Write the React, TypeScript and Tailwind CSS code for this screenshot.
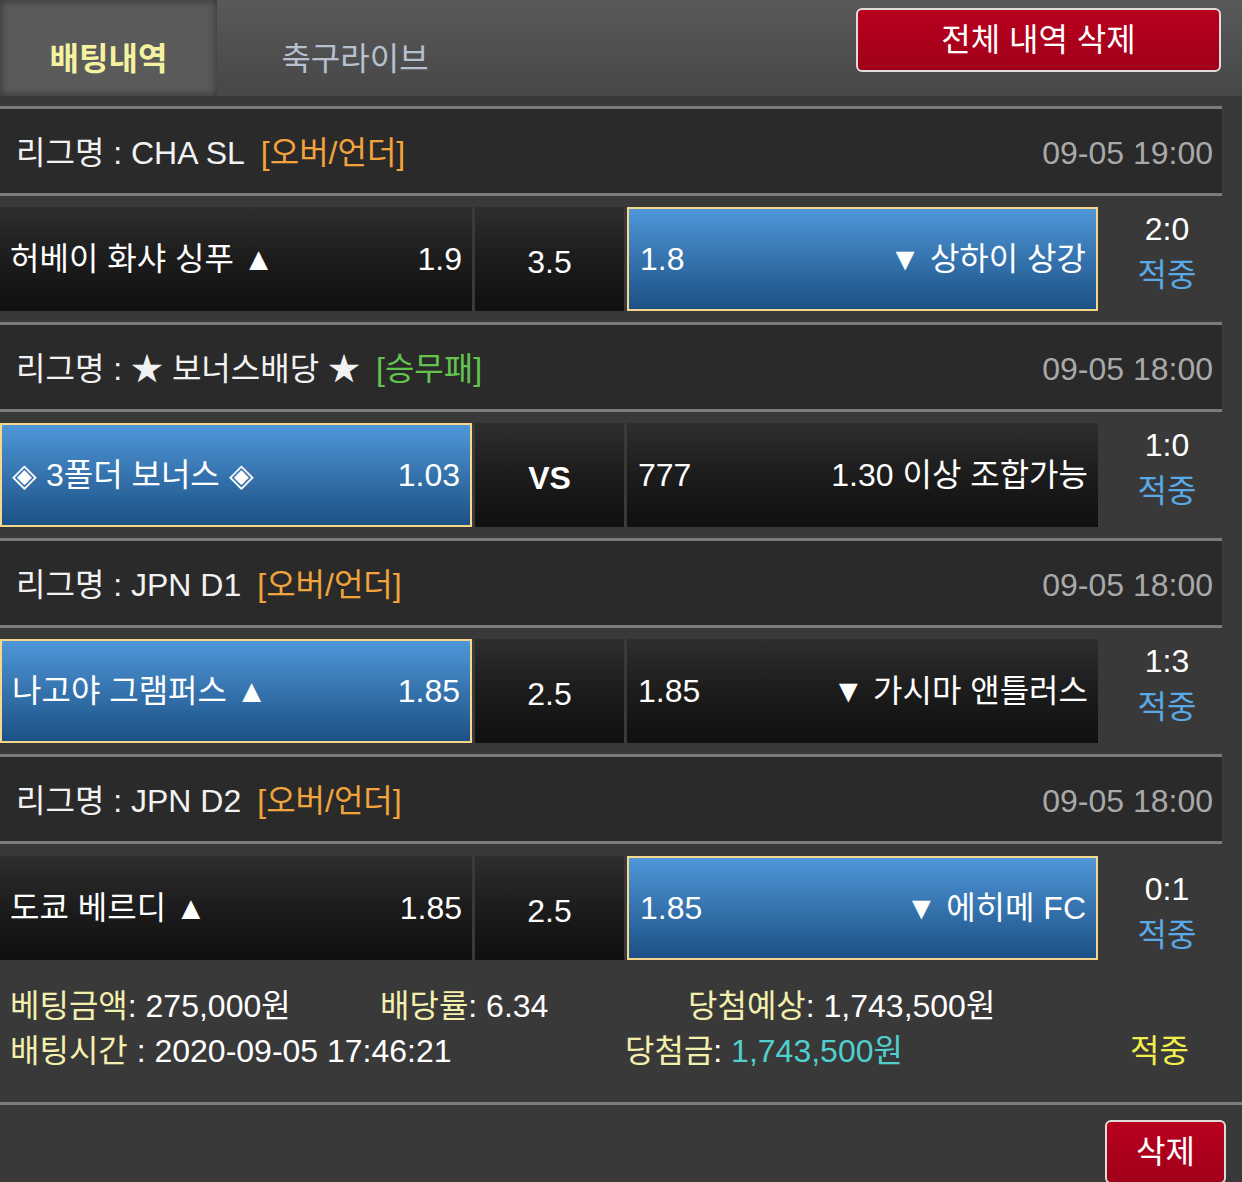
import React from "react";

type Side = { name: string; odds: string };
type Bet = {
  league: string;
  tag: string;
  tagColor: string;
  time: string;
  home: Side;
  mid: string;
  midBold?: boolean;
  away: Side;
  pick: "home" | "away";
  score: string;
};

const bets: Bet[] = [
  {
    league: "리그명 : CHA SL",
    tag: "[오버/언더]",
    tagColor: "text-[#f2a33c]",
    time: "09-05 19:00",
    home: { name: "허베이 화샤 싱푸 ▲", odds: "1.9" },
    mid: "3.5",
    away: { name: "▼ 상하이 상강", odds: "1.8" },
    pick: "away",
    score: "2:0",
  },
  {
    league: "리그명 : ★ 보너스배당 ★",
    tag: "[승무패]",
    tagColor: "text-[#62c44c]",
    time: "09-05 18:00",
    home: { name: "◈ 3폴더 보너스 ◈", odds: "1.03" },
    mid: "VS",
    midBold: true,
    away: { name: "1.30 이상 조합가능", odds: "777" },
    pick: "home",
    score: "1:0",
  },
  {
    league: "리그명 : JPN D1",
    tag: "[오버/언더]",
    tagColor: "text-[#f2a33c]",
    time: "09-05 18:00",
    home: { name: "나고야 그램퍼스 ▲", odds: "1.85" },
    mid: "2.5",
    away: { name: "▼ 가시마 앤틀러스", odds: "1.85" },
    pick: "home",
    score: "1:3",
  },
  {
    league: "리그명 : JPN D2",
    tag: "[오버/언더]",
    tagColor: "text-[#f2a33c]",
    time: "09-05 18:00",
    home: { name: "도쿄 베르디 ▲", odds: "1.85" },
    mid: "2.5",
    away: { name: "▼ 에히메 FC", odds: "1.85" },
    pick: "away",
    score: "0:1",
  },
];

const dark = "bg-linear-to-b from-[#2e2e2e] via-[#1c1c1c] to-[#101010]";
const blue = "bg-linear-to-b from-[#4f97d8] to-[#1c5186] border-2 border-[#f6d78c]";

function BetBlock({ b, last }: { b: Bet; last: boolean }) {
  return (
    <div className="w-[1222px]">
      <div className="h-[3px] bg-[#7b7b7b]" />
      <div className="flex h-[84px] items-center justify-between bg-[#2a2a2a] pl-[16px] pr-[9px] pt-[4px] text-[#f2f2f2]">
        <div className="flex items-center">
          <span>{b.league}</span>
          <span className={`ml-[16px] ${b.tagColor}`}>{b.tag}</span>
        </div>
        <span className="text-[#a9a9a9]">{b.time}</span>
      </div>
      <div className="h-[3px] bg-[#7b7b7b]" />
      <div className={`flex ${last ? "h-[116px] pt-[12px]" : "h-[126px] items-center"}`}>
        <div className="flex h-[104px] gap-[3px]">
          <div
            className={`flex w-[472px] items-center justify-between pl-[10px] pr-[10px] text-white ${
              b.pick === "home" ? blue : dark
            }`}
          >
            <span>{b.home.name}</span>
            <span>{b.home.odds}</span>
          </div>
          <div className={`flex w-[149px] items-center justify-center pt-[6px] text-white ${dark} ${b.midBold ? "font-bold" : ""}`}>
            {b.mid}
          </div>
          <div
            className={`flex w-[471px] items-center justify-between pl-[11px] pr-[10px] text-white ${
              b.pick === "away" ? blue : dark
            }`}
          >
            <span>{b.away.odds}</span>
            <span>{b.away.name}</span>
          </div>
        </div>
        <div className="flex w-[124px] flex-col items-center self-start pl-[14px] pt-[10px] leading-[46px]">
          <span className="text-white">{b.score}</span>
          <span className="text-[#5aa9e6]">적중</span>
        </div>
      </div>
    </div>
  );
}

export default function App() {
  return (
    <div className="h-[1182px] w-[1242px] overflow-hidden bg-[#393939] font-['Liberation_Sans','Noto_Sans_CJK_KR',sans-serif] text-[32px] leading-none">
      <div className="flex h-[96px] items-stretch justify-between bg-linear-to-b from-[#595959] to-[#474747]">
        <div className="flex">
          <div className="flex w-[217px] items-center justify-center bg-[#5a5a5a] pt-[22px] font-bold text-[32px] text-[#f4f2a0] shadow-[inset_0_0_10px_rgba(0,0,0,0.45)]">
            배팅내역
          </div>
          <div className="flex w-[276px] items-center justify-center pt-[22px] text-[32px] text-[#b6c0cf]">
            축구라이브
          </div>
        </div>
        <div className="pr-[21px] pt-[8px]">
          <button className="flex h-[64px] w-[365px] items-center justify-center rounded-[6px] border-2 border-[#e0dcdc] bg-linear-to-b from-[#b8001e] to-[#a0001a] text-[32px] text-white">
            전체 내역 삭제
          </button>
        </div>
      </div>
      <div className="h-[10px]" />
      {bets.map((b, i) => (
        <BetBlock key={i} b={b} last={i === bets.length - 1} />
      ))}
      <div className="flex h-[142px] flex-col gap-[13px] pl-[10px] pt-[30px] text-white">
        <div className="flex">
          <div className="w-[370px]">
            <span className="text-[#f3efad]">베팅금액</span>: 275,000원
          </div>
          <div className="w-[308px]">
            <span className="text-[#f3efad]">배당률</span>: 6.34
          </div>
          <div>
            <span className="text-[#f3efad]">당첨예상</span>: 1,743,500원
          </div>
        </div>
        <div className="flex">
          <div className="w-[615px]">
            <span className="text-[#f3efad]">배팅시간</span> : 2020-09-05 17:46:21
          </div>
          <div className="w-[505px]">
            <span className="text-[#f3efad]">당첨금</span>: <span className="text-[#4fd0cf]">1,743,500원</span>
          </div>
          <div className="text-[#f2ee4c]">적중</div>
        </div>
      </div>
      <div className="h-[3px] bg-[#7b7b7b]" />
      <div className="flex justify-end pr-[16px] pt-[15px]">
        <button className="flex h-[64px] w-[121px] items-center justify-center rounded-[6px] border-2 border-[#e0dcdc] bg-linear-to-b from-[#b8001e] to-[#a0001a] text-[32px] text-white">
          삭제
        </button>
      </div>
    </div>
  );
}
